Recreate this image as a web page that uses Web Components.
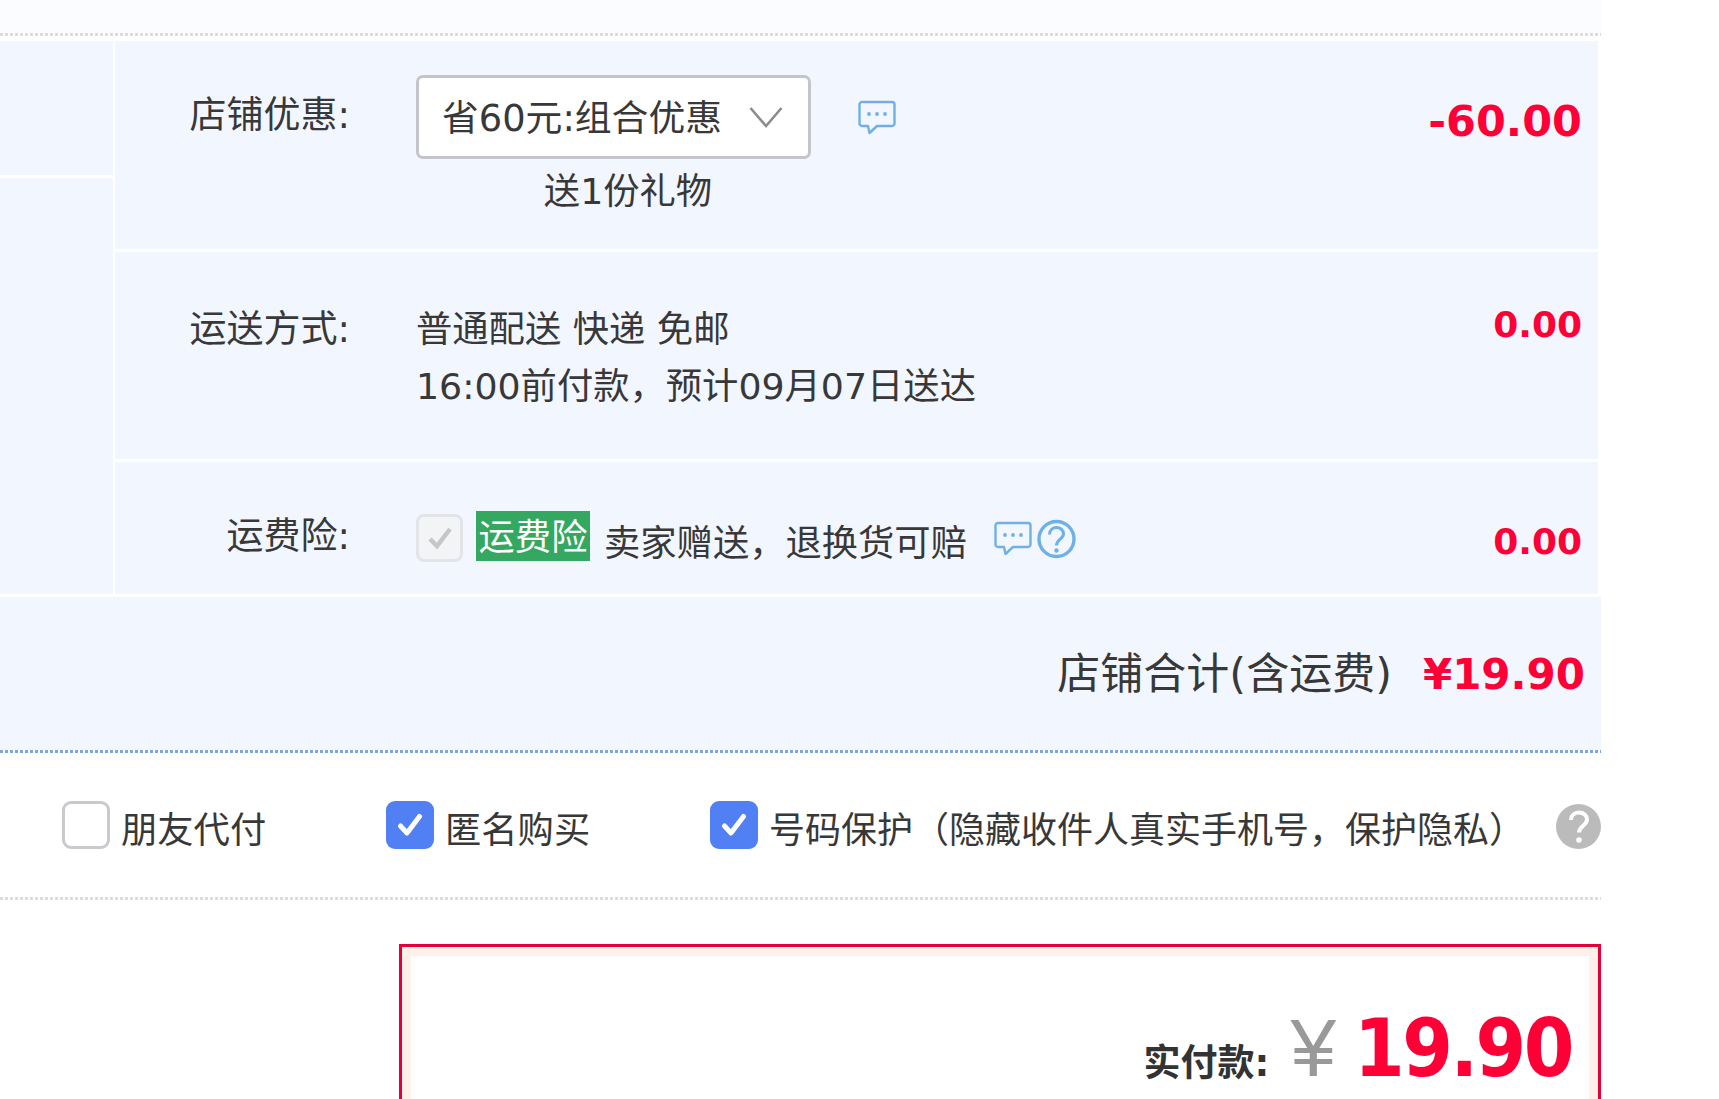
<!DOCTYPE html>
<html lang="zh">
<head>
<meta charset="utf-8">
<title>确认订单</title>
<style>
  html, body { margin: 0; height: 100%; background: #fff; overflow: hidden; }
  body { font-family: "DejaVu Sans", "Noto Sans CJK SC", sans-serif; font-size: 36.3px; line-height: 57px; color: #383838; }
  .strip { display: block; height: 33px; width: 1601px; background: #fbfcff; }
  .gap5 { display: block; height: 5px; }
  .gap-bottom { display: block; height: 44px; }
</style>
</head>
<body>
<div class="strip"></div>
<dotted-line color="#dcdcdc"></dotted-line>
<div class="gap5"></div>

<order-panel>
  <order-row h="208" label-top="46" amount-top="52" content-top="34">
    <span slot="label">店铺优惠:</span>
    <promo-select text="省60元:组合优惠" note="送1份礼物"></promo-select>
    <span slot="amount" style="font-size:43px">-60.00</span>
  </order-row>
  <order-row h="207" label-top="49" amount-top="44" content-top="49">
    <span slot="label">运送方式:</span>
    <div>普通配送 快递 免邮<br>16:00前付款，预计09月07日送达</div>
    <span slot="amount">0.00</span>
  </order-row>
  <order-row h="132" label-top="46" amount-top="51" content-top="52">
    <span slot="label">运费险:</span>
    <freight-line></freight-line>
    <span slot="amount">0.00</span>
  </order-row>
  <shop-total slot="total" label="店铺合计(含运费)" value="¥19.90"></shop-total>
</order-panel>

<dotted-line color="#7fa6e2"></dotted-line>
<option-bar></option-bar>
<dotted-line color="#dcdcdc"></dotted-line>
<div class="gap-bottom"></div>
<pay-box label="实付款:" value="19.90"></pay-box>

<script>
const chatSvg = `<svg width="38" height="35" viewBox="0 0 38 35" fill="none" stroke="#6fb1e6" stroke-width="2.4" stroke-linejoin="round"><path d="M4 2h30a2.5 2.5 0 0 1 2.5 2.500v19a2.500 2.500 0 0 1-2.500 2.500H19l-7.500 7-1.500-7H4a2.500 2.500 0 0 1-2.500-2.500v-19A2.500 2.500 0 0 1 4 2z"/><g fill="#6fb1e6" stroke="none"><circle cx="11" cy="14" r="1.900"/><circle cx="19" cy="14" r="1.900"/><circle cx="27" cy="14" r="1.900"/></g></svg>`;

class DottedLine extends HTMLElement {
  constructor() {
    super();
    const c = this.getAttribute('color');
    this.attachShadow({ mode: 'open' }).innerHTML = `
      <style>:host { display: block; width: 1601px; height: 3px; background-image: linear-gradient(90deg, ${c} 0 3px, transparent 3px 5px); background-size: 5px 3px; }</style>`;
  }
}

class OrderPanel extends HTMLElement {
  constructor() {
    super();
    this.attachShadow({ mode: 'open' }).innerHTML = `
      <style>
        :host { display: block; width: 1601px; }
        .top { display: grid; grid-template-columns: 113px 1fr; column-gap: 2px; }
        .left { display: flex; flex-direction: column; gap: 3px; padding-bottom: 3px; }
        .left div { background: #f2f6ff; }
        .left div:first-child { height: 134px; }
        .left div:last-child { flex: 1; }
        .rows { display: flex; flex-direction: column; gap: 3px; padding-right: 3px; padding-bottom: 3px; }
      </style>
      <div class="top">
        <div class="left"><div></div><div></div></div>
        <div class="rows"><slot></slot></div>
      </div>
      <slot name="total"></slot>`;
  }
}

class OrderRow extends HTMLElement {
  constructor() {
    super();
    const a = n => this.getAttribute(n);
    this.attachShadow({ mode: 'open' }).innerHTML = `
      <style>
        :host { display: grid; grid-template-columns: 235px 1fr auto; column-gap: 66px; height: ${a('h')}px; background: #f2f6ff; padding-right: 16px; box-sizing: border-box; }
        .label { text-align: right; margin-top: ${a('label-top')}px; white-space: nowrap; font-size: 37px; }
        .content { margin-top: ${a('content-top')}px; min-width: 0; }
        .amount { margin-top: ${a('amount-top')}px; color: #ff0036; font-weight: 700; text-align: right; font-size: 36px; }
      </style>
      <div class="label"><slot name="label"></slot></div>
      <div class="content"><slot></slot></div>
      <div class="amount"><slot name="amount"></slot></div>`;
  }
}

class PromoSelect extends HTMLElement {
  constructor() {
    super();
    this.attachShadow({ mode: 'open' }).innerHTML = `
      <style>
        :host { display: block; }
        .line { display: flex; align-items: center; gap: 47px; }
        .box { width: 395px; height: 84px; box-sizing: border-box; border: 3px solid #c4c5ca; border-radius: 7px; background: #fff; display: flex; align-items: center; justify-content: space-between; padding: 0 25px 0 23px; }
        .box span { font-size: 36.8px; position: relative; top: 1px; }
        .note { width: 394px; margin-left: 15px; text-align: center; line-height: 57px; margin-top: 4px; }
      </style>
      <div class="line">
        <div class="box">
          <span>${this.getAttribute('text')}</span>
          <svg width="34" height="22" viewBox="0 0 34 22" fill="none" stroke="#8c8c8c" stroke-width="2.600"><path d="M1.500 2 17 20 32.500 2"/></svg>
        </div>
        <span style="display:flex">${chatSvg}</span>
      </div>
      <div class="note">${this.getAttribute('note')}</div>`;
  }
}

class FreightLine extends HTMLElement {
  constructor() {
    super();
    this.attachShadow({ mode: 'open' }).innerHTML = `
      <style>
        :host { display: flex; align-items: flex-start; }
        .check { width: 47px; height: 48px; box-sizing: border-box; border: 3px solid #e3e4e8; border-radius: 8px; background: #f3f4f6; display: flex; align-items: center; justify-content: center; margin-right: 13px; flex: none; }
        .tag { background: #34a860; color: #fff; width: 114px; height: 50px; line-height: 54px; margin-top: -3px; text-align: center; white-space: nowrap; flex: none; margin-right: 14px; overflow: hidden; }
        .text { margin-top: 1px; margin-right: 27px; white-space: nowrap; }
        .chat { display: flex; margin-top: 7px; margin-right: 5px; }
        .help { display: flex; margin-top: 5px; }
      </style>
      <span class="check"><svg width="26" height="24" viewBox="0 0 26 24" fill="none" stroke="#c6c6c8" stroke-width="4.500"><path d="M3 13l7 7L23 3"/></svg></span>
      <span class="tag">运费险</span>
      <span class="text">卖家赠送，退换货可赔</span>
      <span class="chat">${chatSvg}</span>
      <span class="help"><svg width="39" height="40" viewBox="0 0 39 40" fill="none" stroke="#6fb1e6" stroke-width="3.400"><circle cx="19.500" cy="20" r="17.500"/><path d="M12.500 15.500c0-4.500 3.300-7 7-7s7 2.500 7 6.500c0 5-7 5.500-7 11.500" stroke-width="3"/><circle cx="19.500" cy="31.500" r="2.200" fill="#6fb1e6" stroke="none"/></svg></span>`;
  }
}

class ShopTotal extends HTMLElement {
  constructor() {
    super();
    this.attachShadow({ mode: 'open' }).innerHTML = `
      <style>
        :host { display: flex; height: 153px; background: #f2f6ff; justify-content: flex-end; align-items: center; gap: 31px; padding: 1px 16px 0 0; box-sizing: border-box; font-size: 43px; }
        b { color: #ff0036; font-weight: 700; font-size: 42px; }
      </style>
      <span>${this.getAttribute('label')}</span><b>${this.getAttribute('value')}</b>`;
  }
}

class OptionCheck extends HTMLElement {
  constructor() {
    super();
    const on = this.hasAttribute('checked');
    this.attachShadow({ mode: 'open' }).innerHTML = `
      <style>
        :host { display: flex; align-items: flex-start; gap: 11px; white-space: nowrap; }
        .box { width: 48px; height: 48px; box-sizing: border-box; border-radius: 9px; flex: none; display: flex; align-items: center; justify-content: center; }
        .off { border: 3px solid #c9c9ce; background: #fff; }
        .on { background: #5080f4; }
        .txt { margin-top: 1px; }
      </style>
      <span class="box ${on ? 'on' : 'off'}">${on ? '<svg width="26" height="24" viewBox="0 0 26 24" fill="none" stroke="#fff" stroke-width="5" stroke-linecap="round" stroke-linejoin="round"><path d="M3.500 13l6.500 7L22.500 3.500"/></svg>' : ''}</span>
      <span class="txt"><slot></slot></span>`;
  }
}

class OptionBar extends HTMLElement {
  constructor() {
    super();
    this.attachShadow({ mode: 'open' }).innerHTML = `
      <style>
        :host { display: flex; width: 1601px; height: 144px; box-sizing: border-box; padding: 48px 0 0 62px; }
        option-check:nth-of-type(1) { width: 324px; }
        option-check:nth-of-type(2) { width: 324px; }
        option-check:nth-of-type(3) { flex: 1; font-size: 36px; }
        .q { width: 45px; height: 45px; border-radius: 50%; background: #bbb; color: #fff; flex: none; display: flex; align-items: center; justify-content: center; margin-top: 3px; }
      </style>
      <option-check>朋友代付</option-check>
      <option-check checked>匿名购买</option-check>
      <option-check checked>号码保护（隐藏收件人真实手机号，保护隐私）</option-check>
      <span class="q"><svg width="24" height="36" viewBox="0 0 24 36" fill="none" stroke="#fff" stroke-width="4"><path d="M4 11c0-4.500 3.500-7.500 8-7.500s8 3 8 7c0 6-8 6.500-8 13"/><circle cx="12" cy="31" r="2.800" fill="#fff" stroke="none"/></svg></span>`;
  }
}

class PayBox extends HTMLElement {
  constructor() {
    super();
    this.attachShadow({ mode: 'open' }).innerHTML = `
      <style>
        :host { display: block; width: 1202px; margin-left: 399px; height: 158px; box-sizing: border-box; border: solid #e4003a; border-width: 3px 3px 0; background: #fff0e9; padding: 9px 9px 0; }
        .in { background: #fff; height: 100%; display: flex; justify-content: flex-end; align-items: baseline; padding: 47px 17px 0 0; box-sizing: border-box; font-family: "Liberation Sans", "Noto Sans CJK SC", sans-serif; line-height: 90px; }
        .lab { font-family: "DejaVu Sans", "Noto Sans CJK SC", sans-serif; font-size: 37px; font-weight: 700; color: #333; }
        .cur { font-size: 82px; color: #999; margin: 0 18px 0 21px; }
        .val { font-family: "DejaVu Sans", sans-serif; font-stretch: condensed; font-size: 81px; letter-spacing: -2.500px; font-weight: 700; color: #ff0036; }
      </style>
      <div class="in">
        <span class="lab">${this.getAttribute('label')}</span>
        <span class="cur">¥</span>
        <span class="val">${this.getAttribute('value')}</span>
      </div>`;
  }
}

customElements.define('option-check', OptionCheck);
customElements.define('dotted-line', DottedLine);
customElements.define('order-panel', OrderPanel);
customElements.define('order-row', OrderRow);
customElements.define('promo-select', PromoSelect);
customElements.define('freight-line', FreightLine);
customElements.define('shop-total', ShopTotal);
customElements.define('option-bar', OptionBar);
customElements.define('pay-box', PayBox);
</script>
</body>
</html>
